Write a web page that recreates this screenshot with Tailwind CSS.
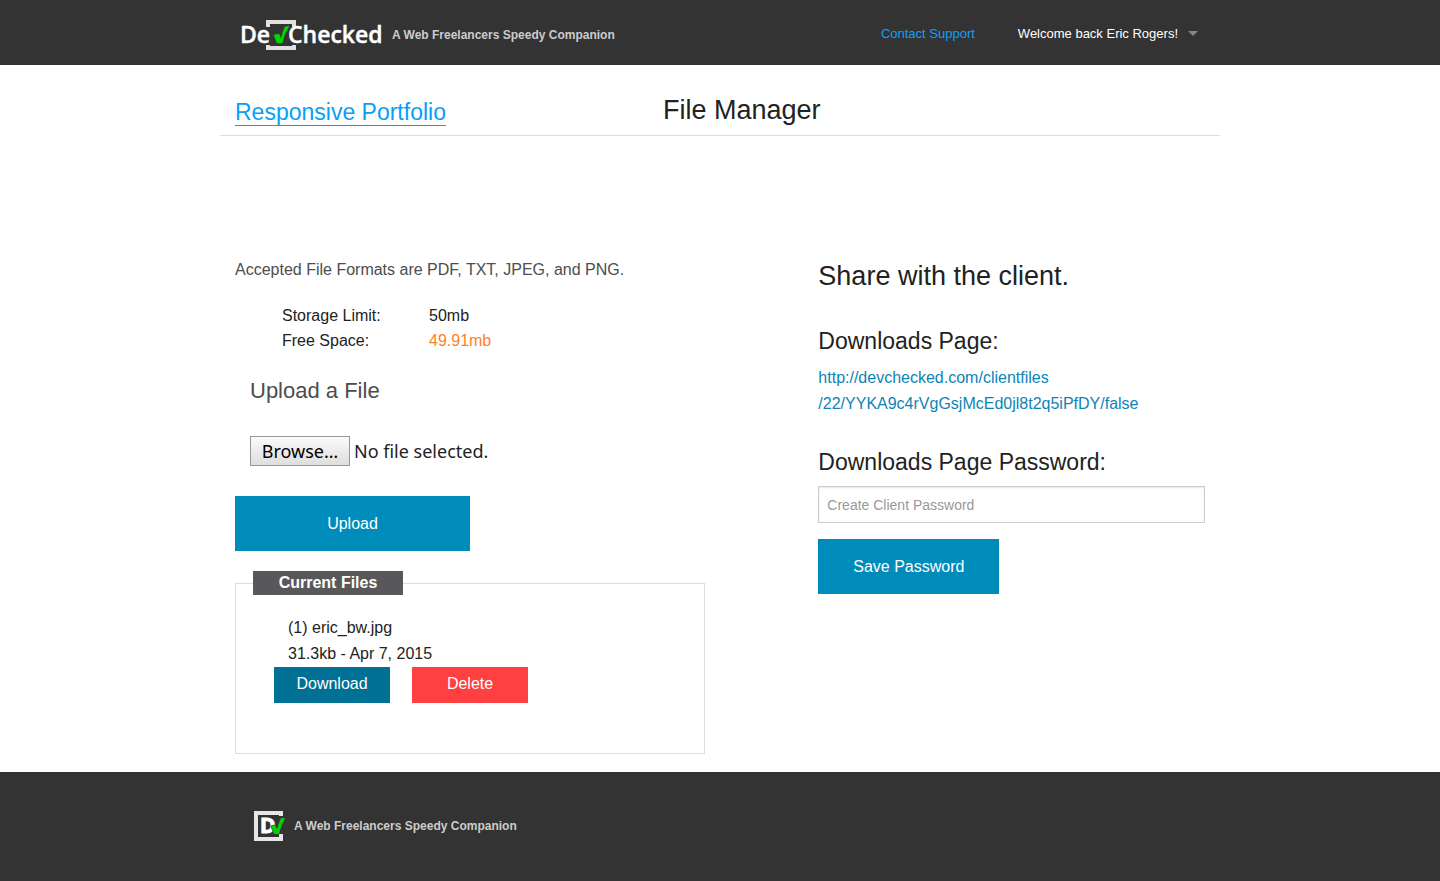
<!DOCTYPE html>
<html lang="en">
<head>
<meta charset="utf-8">
<meta name="viewport" content="width=device-width, initial-scale=1">
<title>DevChecked - File Manager</title>
<script src="https://cdn.jsdelivr.net/npm/@tailwindcss/browser@4"></script>
</head>
<body class="flex min-h-screen flex-col bg-white font-['Liberation_Sans',Arial,sans-serif] text-base text-[#222]">
<header class="bg-[#333]">
  <div class="mx-auto flex h-[65px] w-full max-w-[1000px] items-center justify-between px-[20px]">
    <a href="#" class="flex items-center gap-2 pt-1 text-xs font-bold text-[#ccc]">
      <svg class="h-8 w-[144px]" viewBox="0 0 144 32" role="img" aria-label="DevChecked">
        <path d="M26 8V1h30v7h-4V5H30v3zM26 26v5h30v-5h-4v1H30v-1z" fill="#e0e0e0"/>
        <g fill="#fff" stroke="#fff" stroke-width=".4" font-family="'Open Sans',sans-serif" font-weight="600" font-size="23">
          <text x="0" y="24">De</text>
          <text x="48" y="24">Checked</text>
        </g>
        <path d="M34 16l5-1 2 5q2-8 4-12l4-1q-5 8-7 17h-5z" fill="#00d900" stroke="#00d900" stroke-width=".5"/>
      </svg>
      <span>A Web Freelancers Speedy Companion</span>
    </a>
    <nav class="flex items-center pt-[2px] pr-[2px] text-[13px]">
      <a href="#" class="mr-[43px] text-[#0fa0f5]">Contact Support</a>
      <button type="button" class="flex items-center gap-[10px] text-white">Welcome back Eric Rogers!
        <svg class="h-[5px] w-[10px]" viewBox="0 0 10 5" aria-hidden="true"><path d="M0 0h10L5 5z" fill="#858585"/></svg>
      </button>
    </nav>
  </div>
</header>

<main class="mx-auto w-full max-w-[1000px] grow">
  <div class="flex h-[71px] items-end border-b border-[#ddd] px-[15px] pb-[9px]">
    <h2 class="w-[428px] text-[23px] leading-[25px]"><a href="#" class="inline-block border-b border-[#08a0f7] text-[#08a0f7]">Responsive Portfolio</a></h2>
    <h1 class="text-[27px] leading-8">File Manager</h1>
  </div>

  <div class="flex justify-between pt-[121px]">
    <section class="w-1/2 px-[15px]">
      <p class="leading-[26px] text-[#4d4d4d]">Accepted File Formats are PDF, TXT, JPEG, and PNG.</p>
      <dl class="mt-5 grid grid-cols-[147px_1fr] pl-[47px] leading-[25px]">
        <dt>Storage Limit:</dt><dd>50mb</dd>
        <dt>Free Space:</dt><dd class="text-[#ff7f27]">49.91mb</dd>
      </dl>
      <form>
        <div class="px-[15px]">
          <h3 class="mt-[22px] text-[22px] leading-8 text-[#4d4d4d]">Upload a File</h3>
          <label for="file" class="mt-[29px] flex h-[30px] items-center gap-1 font-['Noto_Sans',sans-serif] text-lg">
            <span class="flex h-[30px] w-[100px] items-center justify-center border border-[#979797] bg-linear-to-b from-[#fafafa] to-[#dedede] text-black">Browse…</span>
            <span>No file selected.</span>
          </label>
          <input id="file" type="file" class="sr-only">
        </div>
        <button type="submit" class="mt-[30px] h-[55px] w-1/2 bg-[#008cba] text-white">Upload</button>
      </form>
      <fieldset class="mt-5 mb-[18px] border border-[#ddd] px-[38px] pb-[50px]">
        <legend class="-ml-[21px] bg-[#58585a] leading-6 font-bold text-white"><span class="block w-[150px] text-center">Current Files</span></legend>
        <div class="pt-5 pl-[14px] leading-[26px]">
          <p>(1) eric_bw.jpg</p>
          <p>31.3kb - Apr 7, 2015</p>
        </div>
        <div class="flex gap-[22px] text-white">
          <button type="button" class="h-9 w-[116px] bg-[#007095] pb-[2px]">Download</button>
          <button type="button" class="h-9 w-[116px] bg-[#ff4040] pb-[2px]">Delete</button>
        </div>
      </fieldset>
    </section>

    <section class="w-5/12 px-[15px]">
      <h2 class="mt-[3px] text-[27px] leading-8">Share with the client.</h2>
      <h3 class="mt-[33px] text-[23px] leading-8">Downloads Page:</h3>
      <a href="#" class="mt-2 block leading-[26px] text-[#0d84b4]">http://devchecked.com/clientfiles<br>/22/YYKA9c4rVgGsjMcEd0jl8t2q5iPfDY/false</a>
      <form>
        <label for="password" class="mt-[29px] block text-[23px] leading-8">Downloads Page Password:</label>
        <input id="password" type="text" placeholder="Create Client Password" class="mt-2 block h-[37px] w-full border border-[#ccc] px-2 text-sm shadow-[inset_0_1px_2px_rgba(0,0,0,0.1)] placeholder:text-[#999]">
        <button type="submit" class="mt-4 h-[55px] w-[181px] bg-[#008cba] text-white">Save Password</button>
      </form>
    </section>
  </div>
</main>

<footer class="bg-[#333]">
  <div class="mx-auto flex h-[109px] w-full max-w-[1000px] items-center gap-2 px-[34px] pb-[2px] text-xs font-bold text-[#ccc]">
    <svg class="h-[30px] w-8" viewBox="0 0 32 30" role="img" aria-label="DevChecked">
      <path d="M0 0h29v5h-4V4H4v22h21v-3h4v7H0z" fill="#e6e6e6"/>
      <text x="6" y="22" fill="#fff" stroke="#fff" stroke-width="1" font-family="'Open Sans',sans-serif" font-weight="700" font-size="21">D</text>
      <path d="M17 15l4-1 2 4q2-7 4-11h4q-4 7-6 16h-5z" fill="#00d100" stroke="#333" stroke-width="1" paint-order="stroke"/>
    </svg>
    <span>A Web Freelancers Speedy Companion</span>
  </div>
</footer>
</body>
</html>
